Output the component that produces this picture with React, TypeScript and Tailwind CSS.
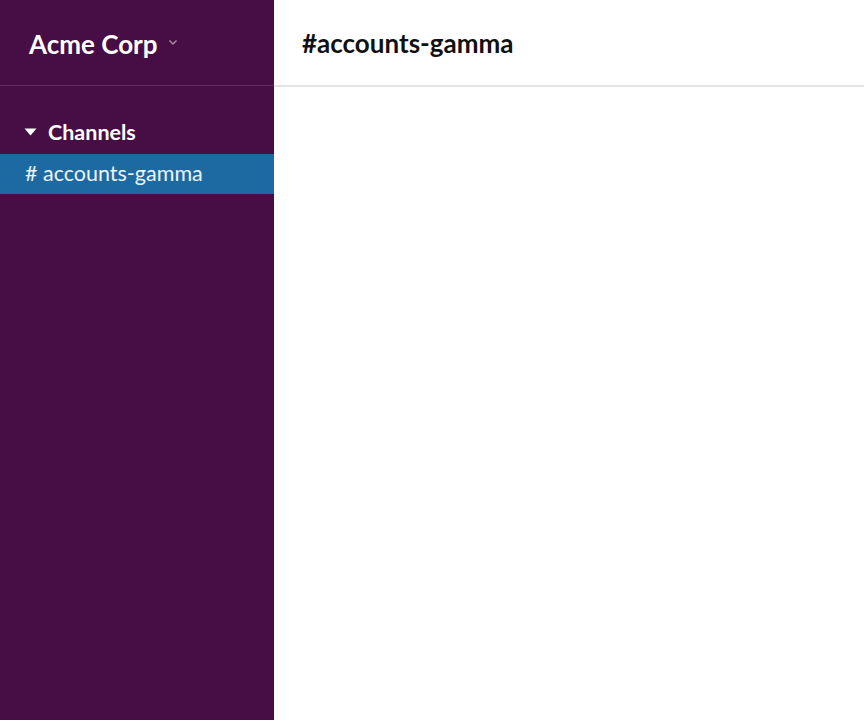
export default function App() {
  return (
    <div className="flex h-[720px] w-full bg-white" style={{ fontFamily: 'Lato, "Noto Sans", sans-serif' }}>
      {/* Sidebar */}
      <aside className="flex w-[274px] shrink-0 flex-col bg-[#470e45] text-white">
        <div className="flex h-[86px] items-center border-b border-[#5f2d5d] pl-[29px] pt-[2px]">
          <span className="text-[26px] font-bold leading-none">Acme Corp</span>
          <svg className="ml-[10px] mt-[-4px] h-[8px] w-[10px]" viewBox="0 0 10 8" fill="none">
            <path d="M1.5 2.5 L5 6 L8.5 2.5" stroke="#a98aa8" strokeWidth="1.5" />
          </svg>
        </div>
        <div className="flex items-center pl-[24px] pt-[34px] pb-[10px]">
          <svg className="h-[8px] w-[13px]" viewBox="0 0 13 8">
            <path d="M0.5 0.5 H12.5 L6.5 7.5 Z" fill="white" />
          </svg>
          <span className="ml-[11px] text-[21.5px] font-bold leading-[24px]">Channels</span>
        </div>
        <div className="flex h-[40px] items-center bg-[#1d6aa3] pl-[25px] text-[21.5px] leading-none text-[#eef4f9]">
          # accounts-gamma
        </div>
      </aside>

      {/* Main */}
      <main className="flex flex-1 flex-col">
        <div className="flex h-[87px] items-center border-b-2 border-[#e3e3e3] pl-[28px]">
          <h1 className="text-[26px] font-bold leading-none text-[#111]">#accounts-gamma</h1>
        </div>
      </main>
    </div>
  )
}
